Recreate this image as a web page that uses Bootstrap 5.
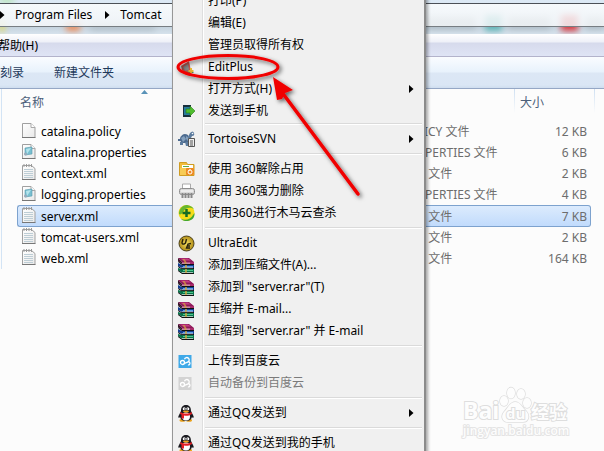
<!DOCTYPE html>
<html lang="zh-CN">
<head>
<meta charset="utf-8">
<meta name="viewport" content="width=device-width, initial-scale=1">
<title>Tomcat</title>
<link href="https://cdn.jsdelivr.net/npm/bootstrap@5.3.0/dist/css/bootstrap.min.css" rel="stylesheet">
<style>
body{font:12px/20px "Noto Sans","Noto Sans CJK SC",sans-serif;color:#000;background:#fcfcfc}
button{font:inherit;color:inherit;background:none;border:0;padding:0}
svg{display:block;flex:none}
.glass{height:34px;background:linear-gradient(#dce9f5,#d9e6f3 26px,#c5d3de 27px,#d6e2ec)}
.glass-tabs{left:0;top:0;width:100%;height:34px}
.address{height:24px;margin-top:3px;border-top:1px solid #4b5057;border-bottom:1px solid #777d82;background:linear-gradient(#fafcfdd9,#f2f5f7d9);line-height:20px}
.address button{margin:0 13px 0 10px}
.menubar{height:23px;background:linear-gradient(#fff,#eef0f8 8px,#d6daec 9px,#dfe4f5);border-bottom:1px solid #b3b3cb;line-height:24px}
.menubar button{margin-left:-2px}
.toolbar{height:32px;background:linear-gradient(#fafcff,#e8f2fc 15px,#dce7f5 16px,#dae6f5 28px,#cfdeef);border-bottom:1px solid #95a7c5;color:#1e395b;line-height:30px;gap:30px}
.listing{margin-left:1px;padding:0 13px 0 15px;border-left:1px solid #d3e4f5}
.files{width:100%;table-layout:fixed;border-collapse:separate;border-spacing:0}
.files th{height:32px;font-weight:400;color:#4c607a;padding:0 0 5px 3px;position:relative}
.files td{height:21px;padding:0;color:#6d6d6d;line-height:19px;white-space:nowrap;border:1px solid transparent;border-width:1px 0}
.files td:first-child{color:#000;border-left-width:1px}
.files td:last-child{text-align:right;border-right-width:1px;padding-right:3px}
.c-size{width:77px}.c-type{width:113px}
.files th:last-child{padding-left:6px;background:linear-gradient(#cfe0f2,#fcfcfc) 0 0/1px 24px no-repeat}
.files th:last-child::after{content:"";position:absolute;left:80px;top:0;width:1px;height:24px;background:linear-gradient(#cfe0f2,#fcfcfc)}
.files .picked td{height:22px;background:linear-gradient(#dcebfd,#c1dbfc);border-color:#7da2ce}
.files .picked td:first-child{border-radius:3px 0 0 3px}
.files .picked td:last-child{border-radius:0 3px 3px 0}
.fname{gap:5px;padding-left:4px}
.sorter{left:124px;top:1px}
.context{left:172px;top:-10px;width:254px;padding-right:2px;background:linear-gradient(90deg,#f0f0f0 29px,#dedede 29px,#dedede 30px,#fff 30px,#fff 31px,#f0f0f0 31px);border-left:1px solid #979797;border-right:2px solid #8b8b8b;box-shadow:2px 2px 3px #0005}
.context button{height:22px;line-height:22px;padding:0 8px 0 5px;white-space:nowrap}
.context .ico{width:18px;margin-right:12px;flex:none}
.context .dim{color:#7b7b7b}
.rule{height:8px;padding:3px 0 0 32px}
.rule.slim{height:6px;padding-top:1px}
.rule::before{content:"";display:block;height:2px;background:#dadada;border-bottom:1px solid #fff}
.marks{left:172px;top:45px;z-index:3}
.watermark{right:26px;bottom:8px}
.wm{font-family:"Open Sans","Noto Sans CJK SC",sans-serif;font-weight:700;fill:#fdfdfd;stroke:#dedede;stroke-width:2px;paint-order:stroke}
.wm .site{font-weight:600;stroke:#e4e4e4}
</style>
<script src="https://cdn.jsdelivr.net/npm/bootstrap@5.3.0/dist/js/bootstrap.bundle.min.js"></script>
</head>
<body class="vh-100 overflow-hidden position-relative">
<svg width="0" height="0" class="position-absolute" aria-hidden="true">
<defs>
<linearGradient id="page" x2="1" y2="1"><stop stop-color="#fff"/><stop offset="1" stop-color="#e9e9e9"/></linearGradient>
<radialGradient id="gold"><stop stop-color="#f6df62"/><stop offset="1" stop-color="#b08c16"/></radialGradient>
<filter id="soft"><feGaussianBlur stdDeviation="3"/></filter>
<symbol id="blank" viewBox="0 0 14 17"><path d="M.5 1.5h8.500l4 4v10h-12.500z" fill="url(#page)" stroke="#a0a0a0"/><path d="M9 1.500v4h4" fill="#fff" stroke="#a9a9a9"/><path d="M0 15.500h13.500" stroke="#777"/></symbol>
<symbol id="props" viewBox="0 0 14 17"><use href="#blank"/><path d="M3 5l7-1v7l-7 1z" fill="#78bfd0" stroke="#5798ab" stroke-width=".6"/><path d="M4 6l5-1-4 6z" fill="#b4e4ec"/><circle cx="3.500" cy="11" r="1.500" fill="#9ab"/></symbol>
<symbol id="note" viewBox="0 0 14 17"><path d="M.5 1.500h9l3.500 3v11h-12.500z" fill="url(#page)" stroke="#a0a0a0"/><path d="M2 0v3M4.500 0v3M7 0v3M9.500 0v3" stroke="#999"/><path d="M2 5.500h9M2 7.500h9M2 9.500h9M2 11.500h9M2 13.500h9" stroke="#bdcdd5"/><path d="M0 15.500h13.500" stroke="#777"/></symbol>
<symbol id="tri" viewBox="0 0 5 8"><path d="M0 0l4.500 4L0 8z"/></symbol>
<symbol id="rar" viewBox="0 0 16 17"><path d="M0 1h11l5 4H4z" fill="#8c1758"/><path d="M2 1.500h8l3 2H5z" fill="#c43c82"/><path d="M0 1l4 4v2L0 4z" fill="#3a1029"/><path d="M4 5h12v2H4z" fill="#a82a6b"/><path d="M4 7.500h12" stroke="#111"/><path d="M0 6l4 2h12v3H4L0 9z" fill="#143d91"/><path d="M5 9.500h10" stroke="#5aa0e8"/><path d="M4 11.500h12" stroke="#111"/><path d="M0 11l4 1h12v4H4l-4-3z" fill="#08724a"/><path d="M5 13.500h10" stroke="#4dc68c"/><path d="M4 16.500h12M0 4.500l4 3M0 9.500l4 2.500M0 13.500l4 3" stroke="#111"/><path d="M4 6.200h8M4 10.700h11M4 15.500h11" stroke="#e8e8e8" stroke-width=".7"/><path d="M4.500 2h2l2 3v2h-2V5zM7 8h2v3H7zM7 12h2v4H7z" fill="#d5a93a" opacity=".7"/></symbol>
<symbol id="cloud" viewBox="0 0 13 13"><path d="M0 0h13v13H0z"/><g fill="none" stroke="#fff" stroke-width="1.300"><circle cx="4" cy="7.500" r="2"/><path d="M5.300 8.700l3.700-1.500a2.400 2.400 0 1 0-3-3M9 7.200a1.500 1.500 0 1 1 .5 2.600"/></g></symbol>
<symbol id="qq" viewBox="0 0 16 17"><ellipse cx="4.500" cy="15.300" rx="3" ry="1.500" fill="#eaa11a"/><ellipse cx="11" cy="15.300" rx="3" ry="1.500" fill="#eaa11a"/><path d="M8 0C4.500 0 3 2.500 3 6L.5 11c-.6 2 .5 2.500 1.500 1C3 15 5 16 8 16s5-1 6-4c1 1.500 2 1 1.500-1L13 6c0-3.500-1.500-6-5-6z" fill="#1b1b20"/><ellipse cx="8" cy="11.500" rx="4" ry="4" fill="#fff"/><path d="M2.500 7c3 2 8 2 11 0l.5 2c-3 2-6 2-8 1.500v3H3.500V9.500L2 9z" fill="#e31f24"/><circle cx="6.200" cy="3.800" r="1.500" fill="#fff"/><circle cx="9.800" cy="3.800" r="1.500" fill="#fff"/><path d="M6.500 3.500v1M9.500 3.500v1" stroke="#000" stroke-width=".8"/><ellipse cx="8" cy="6.500" rx="3" ry="1" fill="#f4a21b"/></symbol>
</defs>
</svg>

<header class="glass position-relative overflow-hidden">
<svg class="glass-tabs position-absolute" aria-hidden="true"><g filter="url(#soft)"><path d="M0-2h14v4H0z" fill="#a6e29a"/><path d="M0 20h4v12H0z" fill="#e6dc4a"/><path d="M66 23h14v8H66z" fill="#ee8c5a"/><path d="M90 25h65v5H90zM426 17h50v12h-50zM508 17h42v12h-42zM586 17h18v12h-18z" fill="#aebbc4"/><path d="M485 15h17v16h-17z" fill="#5fb5b7"/><path d="M561 15h17v16h-17z" fill="#da3940"/></g></svg>
<nav class="address d-flex align-items-center position-relative" aria-label="路径">
<svg width="5" height="8"><use href="#tri"/></svg><button type="button">Program Files</button>
<svg width="5" height="8"><use href="#tri"/></svg><button type="button">Tomcat</button>
</nav>
</header>
<div class="menubar"><button type="button">帮助(H)</button></div>
<div class="toolbar d-flex"><button type="button">刻录</button><button type="button">新建文件夹</button></div>

<main class="listing">
<table class="files">
<colgroup><col><col class="c-type"><col class="c-size"></colgroup>
<thead><tr><th scope="col">名称<svg class="sorter position-absolute" width="7" height="4"><path d="M0 4l3.500-4L7 4z" fill="#5a93b8"/></svg></th><th scope="col"></th><th scope="col">大小</th></tr></thead>
<tbody>
<tr><td><div class="fname d-flex"><svg width="14" height="17"><use href="#blank"/></svg>catalina.policy</div></td><td>POLICY 文件</td><td>12 KB</td></tr>
<tr><td><div class="fname d-flex"><svg width="14" height="17"><use href="#props"/></svg>catalina.properties</div></td><td>PROPERTIES 文件</td><td>6 KB</td></tr>
<tr><td><div class="fname d-flex"><svg width="14" height="17"><use href="#note"/></svg>context.xml</div></td><td>XML 文件</td><td>2 KB</td></tr>
<tr><td><div class="fname d-flex"><svg width="14" height="17"><use href="#props"/></svg>logging.properties</div></td><td>PROPERTIES 文件</td><td>4 KB</td></tr>
<tr class="picked"><td><div class="fname d-flex"><svg width="14" height="17"><use href="#note"/></svg>server.xml</div></td><td>XML 文件</td><td>7 KB</td></tr>
<tr><td><div class="fname d-flex"><svg width="14" height="17"><use href="#note"/></svg>tomcat-users.xml</div></td><td>XML 文件</td><td>2 KB</td></tr>
<tr><td><div class="fname d-flex"><svg width="14" height="17"><use href="#note"/></svg>web.xml</div></td><td>XML 文件</td><td>164 KB</td></tr>
</tbody>
</table>
</main>

<div class="context position-absolute d-flex flex-column" role="menu">
<button type="button" role="menuitem" class="d-flex align-items-center"><span class="ico"></span>打印(P)</button>
<button type="button" role="menuitem" class="d-flex align-items-center"><span class="ico"></span>编辑(E)</button>
<button type="button" role="menuitem" class="d-flex align-items-center"><span class="ico"></span>管理员取得所有权</button>
<button type="button" role="menuitem" class="d-flex align-items-center"><span class="ico"><svg width="17" height="17"><path d="M3 7l8-5 2 10-8 2z" fill="#c5574e"/><path d="M5 8l5-3 1 6-4 1z" fill="#888"/><path d="M7 13l7-1 2 2H8z" fill="#5a8d5e"/><path d="M13 9v5M10.500 12h5" stroke="#e9b932" stroke-width="2"/></svg></span>EditPlus</button>
<button type="button" role="menuitem" class="d-flex align-items-center"><span class="ico"></span>打开方式(H)<svg class="ms-auto" width="5" height="8"><use href="#tri"/></svg></button>
<button type="button" role="menuitem" class="d-flex align-items-center"><span class="ico"><svg width="18" height="14"><path d="M5 1h8v12H5z" fill="#17303c"/><path d="M6 3h6v8H6z" fill="#287d9d"/><path d="M8 5h4V2l5 5-5 5V9H8z" fill="#4fbd2e" stroke="#277a16" stroke-width=".6"/></svg></span>发送到手机</button>
<div class="rule slim"></div>
<button type="button" role="menuitem" class="d-flex align-items-center"><span class="ico"><svg width="18" height="18"><path d="M2 8q3-6 8-3l2 5-2 3H3z" fill="#4d6b8f"/><path d="M3 8l3-2 2 3-3 3zM8 6l3 2-1 3-2-2z" fill="#84a0bd"/><path d="M10 7l2-4q3-3 4 0 1 3-2 3l-2 4zM2 12h3v3H2zM7 12h3v4H8z" fill="#5c7b9e"/><circle cx="14.500" cy="3.500" r=".8" fill="#fff"/><path d="M0 10h3" stroke="#4d6b8f" stroke-width="2"/><path d="M10.500 8.500h6v8h-6z" fill="#eee" stroke="#555"/><path d="M12 11h3M12 13h3M12 15h3" stroke="#555"/></svg></span>TortoiseSVN<svg class="ms-auto" width="5" height="8"><use href="#tri"/></svg></button>
<div class="rule"></div>
<button type="button" role="menuitem" class="d-flex align-items-center"><span class="ico"><svg width="18" height="16"><path d="M1.500 1.500h7l1 2h6.500v11H1.500z" fill="#f0bd3b" stroke="#cf9c23"/><path d="M4 4h11v3H4z" fill="#fff"/><path d="M5 5.500h6" stroke="#5bab49"/><path d="M2 7h14v7H2z" fill="#f7cb55"/><rect x="8" y="7" width="8" height="7" rx="1" fill="#ed8a21"/><circle cx="12" cy="11" r="2" fill="none" stroke="#fff"/><path d="M10.500 10l2-2" stroke="#fff"/></svg></span>使用 360解除占用</button>
<button type="button" role="menuitem" class="d-flex align-items-center"><span class="ico"><svg width="18" height="16"><path d="M4.500 1h8v6h-8z" fill="#fff" stroke="#aaa"/><rect x="1.500" y="5.500" width="15" height="6" rx="2" fill="#d8d8d8" stroke="#8e8e8e"/><path d="M3 8h12" stroke="#fff"/><path d="M4.500 10v5M7.500 10v5M10.500 10v5M13.500 10v5" stroke="#888" stroke-width="2"/></svg></span>使用 360强力删除</button>
<button type="button" role="menuitem" class="d-flex align-items-center"><span class="ico"><svg width="18" height="18"><circle cx="8.500" cy="9" r="8" fill="#f5dc19"/><path d="M1 10C1 4 6 0 10 1.200c3 .8 5 2 6 4C12 2.500 7 4 5 8c-1 2-3 3-4 2z" fill="#67b72e"/><path d="M3 15c5 2 10 0 12-4l1.500-2c.5 6-4 8-8 8-2 0-4-.5-5.500-2z" fill="#43a831"/><path d="M8.500 5v8M4.500 9h8" stroke="#166c24" stroke-width="2.500"/></svg></span>使用360进行木马云查杀</button>
<div class="rule"></div>
<button type="button" role="menuitem" class="d-flex align-items-center"><span class="ico"><svg width="17" height="17"><circle cx="8.500" cy="8.500" r="7.500" fill="url(#gold)" stroke="#4b421e"/><path d="M5 4L4 7.500Q4 9.500 6 9l1.500-1 1-4M13 8.500l-3 .5-1.500 4h3.500M9.500 11H12" fill="none" stroke="#29220c" stroke-width="1.400"/></svg></span>UltraEdit</button>
<button type="button" role="menuitem" class="d-flex align-items-center"><span class="ico"><svg width="16" height="17"><use href="#rar"/></svg></span>添加到压缩文件(A)...</button>
<button type="button" role="menuitem" class="d-flex align-items-center"><span class="ico"><svg width="16" height="17"><use href="#rar"/></svg></span>添加到 "server.rar"(T)</button>
<button type="button" role="menuitem" class="d-flex align-items-center"><span class="ico"><svg width="16" height="17"><use href="#rar"/></svg></span>压缩并 E-mail...</button>
<button type="button" role="menuitem" class="d-flex align-items-center"><span class="ico"><svg width="16" height="17"><use href="#rar"/></svg></span>压缩到 "server.rar" 并 E-mail</button>
<div class="rule"></div>
<button type="button" role="menuitem" class="d-flex align-items-center"><span class="ico"><svg width="14" height="13" fill="#3fa9e8"><use href="#cloud"/></svg></span>上传到百度云</button>
<button type="button" role="menuitem" class="d-flex align-items-center dim" aria-disabled="true"><span class="ico"><svg width="14" height="13" fill="#d3d3d3"><use href="#cloud"/></svg></span>自动备份到百度云</button>
<div class="rule"></div>
<button type="button" role="menuitem" class="d-flex align-items-center"><span class="ico"><svg width="16" height="17"><use href="#qq"/></svg></span>通过QQ发送到<svg class="ms-auto" width="5" height="8"><use href="#tri"/></svg></button>
<div class="rule"></div>
<button type="button" role="menuitem" class="d-flex align-items-center"><span class="ico"><svg width="16" height="17"><use href="#qq"/></svg></span>通过QQ发送到我的手机</button>
</div>

<svg class="marks position-absolute pe-none" width="200" height="165" aria-hidden="true">
<defs><filter id="drop" x="-10%" y="-10%" width="130%" height="130%"><feDropShadow dx="2" dy="2" stdDeviation="2" flood-opacity=".6"/></filter></defs>
<g filter="url(#drop)"><ellipse cx="56" cy="22" rx="50" ry="11.500" fill="none" stroke="#f00505" stroke-width="3"/><path d="M186 149L112 50" stroke="#f00505" stroke-width="3.500" stroke-linecap="round"/><path d="M101 32l20 13-8 3-3 6-5 1z" fill="#f00505"/></g>
</svg>

<svg class="watermark position-absolute pe-none" width="118" height="60" role="img" aria-label="百度经验">
<g class="wm"><text x="3" y="36" font-size="23">Bai</text><g stroke-width="1.500"><ellipse cx="44" cy="18" rx="4" ry="5"/><ellipse cx="51" cy="10" rx="4" ry="5.500"/><ellipse cx="61" cy="11" rx="4" ry="5"/><ellipse cx="67" cy="20" rx="4" ry="5"/><path d="M55 19c-5 0-7 6-11 10-4 5-1 10 4 10h15c6 0 7-7 3-11-4-4-6-9-11-9z"/></g><text x="46" y="36" font-size="15">du</text><text x="71" y="36" font-size="18">经验</text><text class="site" x="3" y="52" font-size="12">jingyan.baidu.com</text></g>
</svg>
</body>
</html>
